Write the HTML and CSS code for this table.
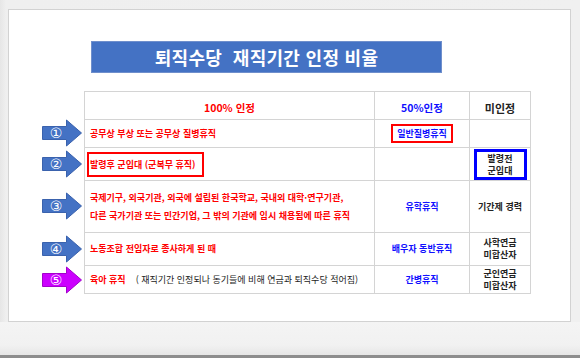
FILE: index.html
```html
<!DOCTYPE html>
<html lang="ko">
<head>
<meta charset="utf-8">
<link rel="stylesheet" href="styles.css">
</head>
<body>
<div class="frame">
  <div class="panel">
    <div class="title">퇴직수당&nbsp;&nbsp;재직기간 인정 비율</div>
    <div class="grid">
      <div class="arrow-cell"></div>
      <div class="cell c1 head red">100% 인정</div>
      <div class="cell c2 head blue">50%인정</div>
      <div class="cell c3 head black">미인정</div>

      <div class="arrow-cell">
        <svg class="arrow" width="40" height="28" viewBox="0 0 40 28"><polygon points="0.5,7.5 24.5,7.5 24.5,1 39.5,14 24.5,27 24.5,20.5 0.5,20.5" fill="#4472c4" stroke="#3a62ad" stroke-width="1"/><text x="14" y="19" text-anchor="middle" class="num">①</text></svg>
      </div>
      <div class="cell c1 red">공무상 부상 또는 공무상 질병휴직</div>
      <div class="cell c2 blue"><span class="rbox">일반질병휴직</span></div>
      <div class="cell c3"></div>

      <div class="arrow-cell">
        <svg class="arrow" width="40" height="28" viewBox="0 0 40 28"><polygon points="0.5,7.5 24.5,7.5 24.5,1 39.5,14 24.5,27 24.5,20.5 0.5,20.5" fill="#4472c4" stroke="#3a62ad" stroke-width="1"/><text x="14" y="19" text-anchor="middle" class="num">②</text></svg>
      </div>
      <div class="cell c1 red"><span class="rbox wide">발령후 군입대 (군복무 휴직)</span></div>
      <div class="cell c2"></div>
      <div class="cell c3 black"><span class="bbox">발령전<br>군입대</span></div>

      <div class="arrow-cell">
        <svg class="arrow" width="40" height="28" viewBox="0 0 40 28"><polygon points="0.5,7.5 24.5,7.5 24.5,1 39.5,14 24.5,27 24.5,20.5 0.5,20.5" fill="#4472c4" stroke="#3a62ad" stroke-width="1"/><text x="14" y="19" text-anchor="middle" class="num">③</text></svg>
      </div>
      <div class="cell c1 red tall">국제기구, 외국기관, 외국에 설립된 한국학교, 국내외 대학·연구기관,<br>다른 국가기관 또는 민간기업, 그 밖의 기관에 임시 채용됨에 따른 휴직</div>
      <div class="cell c2 blue">유학휴직</div>
      <div class="cell c3 black">기간제 경력</div>

      <div class="arrow-cell">
        <svg class="arrow" width="40" height="28" viewBox="0 0 40 28"><polygon points="0.5,7.5 24.5,7.5 24.5,1 39.5,14 24.5,27 24.5,20.5 0.5,20.5" fill="#4472c4" stroke="#3a62ad" stroke-width="1"/><text x="14" y="19" text-anchor="middle" class="num">④</text></svg>
      </div>
      <div class="cell c1 red">노동조합 전임자로 종사하게 된 때</div>
      <div class="cell c2 blue">배우자 동반휴직</div>
      <div class="cell c3 black">사학연금<br>미합산자</div>

      <div class="arrow-cell">
        <svg class="arrow" width="40" height="28" viewBox="0 0 40 28"><polygon points="0.5,7.5 24.5,7.5 24.5,1 39.5,14 24.5,27 24.5,20.5 0.5,20.5" fill="#cc00ff" stroke="#a300cc" stroke-width="1"/><text x="14" y="19" text-anchor="middle" class="num">⑤</text></svg>
      </div>
      <div class="cell c1 last"><span class="red">육아 휴직</span><span class="note">( 재직기간 인정되나 동기들에 비해 연금과 퇴직수당 적어짐)</span></div>
      <div class="cell c2 blue last">간병휴직</div>
      <div class="cell c3 black last">군인연금<br>미합산자</div>
    </div>
  </div>
</div>
<div class="floor"></div>
<div class="edge"></div>
</body>
</html>
```
FILE: styles.css
```css
html, body {
  margin: 0;
  padding: 0;
}
body {
  width: 580px;
  height: 358px;
  overflow: hidden;
  background: #eeeeee;
  font-family: "Noto Sans CJK KR", "Noto Sans", sans-serif;
}
.frame {
  height: 322px;
  padding: 9px 0 0 8px;
  box-sizing: border-box;
  background: linear-gradient(90deg, #e6e6e6 0, #efefef 6px, #f0f0f0 100%);
}
.panel {
  width: 563px;
  height: 313px;
  box-sizing: border-box;
  border: 1px solid #d2d2d2;
  background: #ffffff;
  padding: 31px 0 0 33px;
}
.title {
  margin-left: 49px;
  width: 351px;
  height: 32px;
  box-sizing: border-box;
  border: 1px solid #6f8fcc;
  background: #4472c4;
  color: #ffffff;
  font-weight: 700;
  font-size: 18px;
  line-height: 30px;
  text-align: center;
  letter-spacing: 0.3px;
}
.grid {
  margin-top: 18px;
  display: grid;
  grid-template-columns: 42px 290px 95px 62px;
  grid-template-rows: 28px 28px 33px 52px 33px 29px;
}
.arrow-cell {
  display: flex;
  align-items: center;
}
.arrow {
  display: block;
}
.num {
  fill: #ffffff;
  font-family: "DejaVu Sans", "Noto Sans CJK KR", sans-serif;
  font-size: 14px;
}
.cell {
  border-left: 1px solid #d4d4d4;
  border-top: 1px solid #d4d4d4;
  display: flex;
  align-items: center;
  justify-content: center;
  font-weight: 700;
  font-size: 9px;
  line-height: 12px;
  text-align: center;
}
.c3 {
  border-right: 1px solid #d4d4d4;
}
.last {
  border-bottom: 1px solid #d4d4d4;
}
.c1 {
  justify-content: flex-start;
  text-align: left;
  padding-left: 5px;
}
.head {
  font-size: 10.5px;
  padding-top: 5px;
  box-sizing: border-box;
}
.c1.head {
  justify-content: center;
  padding-left: 0;
}
.c3.head {
  font-size: 11px;
}
.tall {
  line-height: 18px;
  padding-top: 1px;
}
.red { color: #ff0000; }
.blue { color: #1010ff; }
.black { color: #222222; }
.rbox {
  border: 2px solid #ff0000;
  padding: 2px 4px;
  line-height: 11px;
}
.rbox.wide {
  margin-left: -3px;
  width: 117px;
  height: 25px;
  box-sizing: border-box;
  padding: 0 0 0 1px;
  display: flex;
  align-items: center;
}
.bbox {
  border: 3px solid #0000ff;
  width: 53px;
  height: 31px;
  box-sizing: border-box;
  display: flex;
  align-items: center;
  justify-content: center;
  margin-top: 1px;
  line-height: 12px;
}
.note {
  color: #222222;
  font-weight: 400;
  font-size: 9px;
  margin-left: 10px;
}
.floor {
  height: 33px;
  background: linear-gradient(180deg, #f4f4f4 0, #f1f1f1 70%, #e6e6e6 100%);
}
.edge {
  height: 3px;
  background: #8d8d8d;
}
```
